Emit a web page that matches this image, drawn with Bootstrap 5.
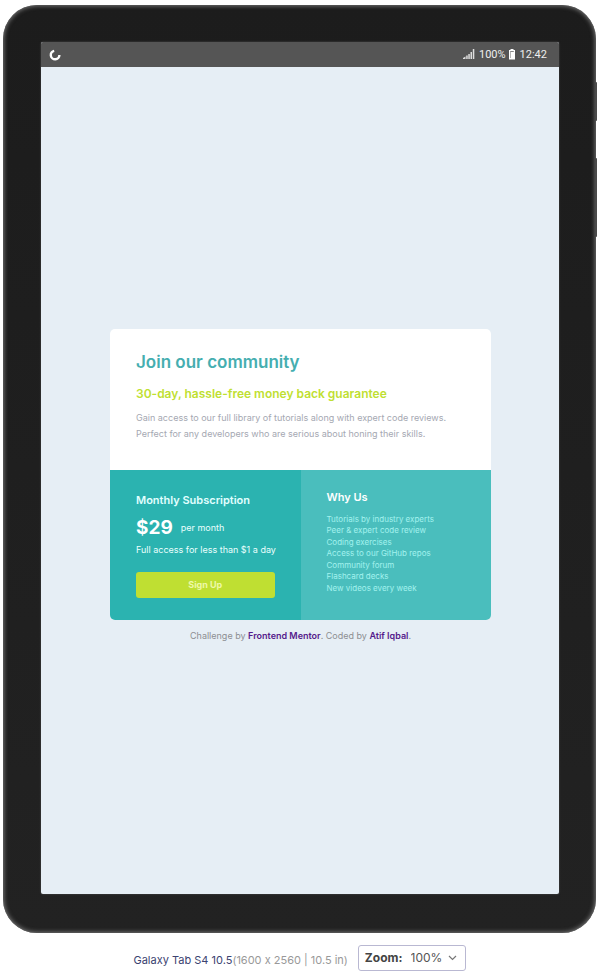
<!DOCTYPE html>
<html lang="en">
<head>
<meta charset="utf-8">
<meta name="viewport" content="width=device-width, initial-scale=1">
<title>Galaxy Tab S4 10.5 preview</title>
<link href="https://cdn.jsdelivr.net/npm/bootstrap@5.3.0/dist/css/bootstrap.min.css" rel="stylesheet">
<style>
body { background: #fff; font-family: Inter, "Liberation Sans", sans-serif; font-variant-ligatures: no-contextual; }
.tablet { margin: 5px 2px 0 3px; padding: 37px 37px 39px 38px; background: linear-gradient(#1c1c1c, #222); border-radius: 34px; box-shadow: inset 0 0 4px 1px #777; }
.side-key { right: -1px; width: 2px; background: #4a4a4a; border-radius: 1px; }
.key-power { top: 77px; height: 39px; }
.key-volume { top: 153px; height: 79px; }
.screen { background: #e6eef5; min-height: 852px; border-radius: 2px; box-shadow: 0 0 2px #555; }
.status-bar { height: 25px; background: #555; color: #eee; padding: 0 12px 0 8px; font: 11px/27px Roboto, sans-serif; border-radius: 2px 2px 0 0; }
.battery-level { margin: 0 3px 0 4px; }
.clock { margin-left: 5px; }
.page-area { padding: 0 68px 0 69px; margin-top: 10px; }
.offer { max-width: 460px; border-radius: 5px; background: #fff; }
.intro { padding: 22px 26px 28px; }
.intro h1 { font-size: 17px; line-height: 22px; color: #45aeb0; margin-bottom: 11px; }
.intro h2 { font-size: 12px; line-height: 20px; color: #bfdf32; margin-bottom: 6px; }
.intro p { font-size: 9px; line-height: 16px; color: #a5a8b2; }
.plan { background: #2bb3b0; color: #e9fffd; padding: 22px 26px 22px; font-size: 9px; line-height: 16px; }
.plan h3, .reasons h3 { font-size: 11px; line-height: 16px; }
.plan h3 { color: #e2ffff; margin-bottom: 10px; }
.price-line { gap: 8px; margin-bottom: 4px; }
.price { font-size: 19px; line-height: 20px; color: #fff; }
.btn-signup { height: 26px; font-size: 9px; line-height: 16px; color: #eef9a8; background: #bfdf32; border-radius: 3px; margin-top: 14px; }
.btn-signup:hover { background: #cbe84d; color: #fff; }
.reasons { background: #4abebd; color: #a3f2ee; padding: 19px 26px; font-size: 8px; }
.reasons h3 { color: #fff; margin-bottom: 9px; }
.reasons ul { height: 81px; grid-auto-rows: 1fr; line-height: 11px; }
.credits { font-size: 9px; line-height: 14px; color: #8d8f92; margin-top: 9px; }
.credits a { color: #551a8b; }
.device-bar { margin-top: 12px; padding-left: 1px; font-size: 11px; gap: 10px; }
.device-name { color: #3b4371; }
.device-size { color: #999; }
.zoom-box { border: 1px solid #b9b8d2; border-radius: 3px; height: 26px; padding: 0 8px 0 6px; color: #444; }
.zoom-box label { font-size: 12px; }
.zoom-box select { appearance: none; border: 0; background: none; color: #555; font-size: 12px; padding: 0; width: 37px; }
</style>
</head>
<body>
<main class="tablet position-relative">
  <span class="side-key key-power position-absolute"></span>
  <span class="side-key key-volume position-absolute"></span>
  <div class="screen d-flex flex-column">
    <header class="status-bar d-flex align-items-center">
      <svg width="12" height="12" viewBox="0 0 12 12" fill="none" stroke="#fff" stroke-width="2.4" aria-hidden="true"><path d="M5.2 1.8A4.3 4.3 0 1 0 10.4 6"/></svg>
      <svg class="ms-auto" width="12" height="11" viewBox="0 0 12 11" fill="#ddd" aria-hidden="true"><path d="M0 10V9L2.5 7.5V10zM3.2 6.5h1.5V10H3.2zM5.3 5h1.5v5H5.3zM7.5 3H9v7H7.5zM9.8 0h1.5v10H9.8z"/></svg>
      <span class="battery-level">100%</span>
      <svg width="6" height="11" viewBox="0 0 6 11" aria-hidden="true"><path fill="#fff" d="M1.5 0h3v1H6v9.5H0V1h1.5z"/><path fill="#888" d="M1.2 2h3.6v1H1.2zM1.2 3h.6v6h-.6z"/></svg>
      <span class="clock">12:42</span>
    </header>
    <div class="page-area flex-grow-1 d-flex flex-column justify-content-center align-items-center">
      <section class="offer w-100 overflow-hidden">
        <div class="intro">
          <h1 class="fw-semibold">Join our community</h1>
          <h2 class="fw-semibold">30-day, hassle-free money back guarantee</h2>
          <p class="mb-0">Gain access to our full library of tutorials along with expert code reviews.<br>Perfect for any developers who are serious about honing their skills.</p>
        </div>
        <div class="row g-0">
          <div class="col-6 plan">
            <h3 class="fw-semibold">Monthly Subscription</h3>
            <div class="price-line d-flex align-items-center"><span class="price fw-bold">$29</span><span>per month</span></div>
            <div class="text-nowrap">Full access for less than $1 a day</div>
            <button type="button" class="btn btn-signup w-100 border-0 py-0 fw-bold">Sign Up</button>
          </div>
          <div class="col-6 reasons">
            <h3 class="fw-semibold">Why Us</h3>
            <ul class="list-unstyled mb-0 d-grid">
              <li>Tutorials by industry experts</li>
              <li>Peer &amp; expert code review</li>
              <li>Coding exercises</li>
              <li>Access to our GitHub repos</li>
              <li>Community forum</li>
              <li>Flashcard decks</li>
              <li>New videos every week</li>
            </ul>
          </div>
        </div>
      </section>
      <footer class="credits text-center">Challenge by <a class="fw-semibold text-decoration-none" href="#">Frontend Mentor</a>. Coded by <a class="fw-semibold text-decoration-none" href="#">Atif Iqbal</a>.</footer>
    </div>
  </div>
</main>
<div class="device-bar d-flex justify-content-center align-items-center">
  <div class="pt-1"><span class="device-name">Galaxy Tab S4 10.5</span><span class="device-size">(1600 x 2560 | 10.5 in)</span></div>
  <div class="zoom-box d-flex align-items-center">
    <label for="zoom" class="fw-bold me-2">Zoom:</label>
    <select id="zoom"><option>100%</option><option>75%</option><option>50%</option></select>
    <svg width="9" height="6" viewBox="0 0 9 6" fill="none" stroke="#777" stroke-width="1.2" aria-hidden="true"><path d="M1 1l3.5 3.5L8 1"/></svg>
  </div>
</div>
<script src="https://cdn.jsdelivr.net/npm/bootstrap@5.3.0/dist/js/bootstrap.bundle.min.js"></script>
</body>
</html>
